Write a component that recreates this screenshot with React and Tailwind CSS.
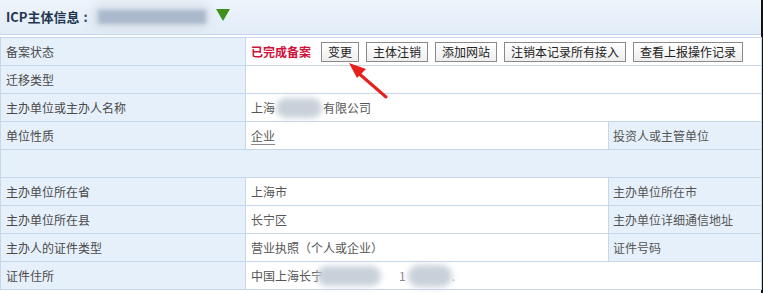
import React from "react";

const font = { fontFamily: '"Noto Sans CJK SC", "Noto Sans", sans-serif' };

function Btn({ children }) {
  return (
    <span className="inline-flex h-[20px] items-center border border-[#8a8a8a] bg-gradient-to-b from-white to-[#eeeeee] px-[6px] text-[12px] leading-none text-[#222]">
      {children}
    </span>
  );
}

function Blur({ w, h = 18, className = "" }) {
  return (
    <span
      className={"inline-block rounded-full bg-[#c8d0da] blur-[3px] align-middle " + className}
      style={{ width: w, height: h }}
    />
  );
}

const L = "h-[28px] border border-[#c7d7ea] bg-[#e6f0fb] pl-[5px] text-[12px] text-[#4a4a4a] align-middle";
const V = "h-[28px] border border-[#c7d7ea] bg-white pl-[5px] text-[12px] text-[#555] align-middle";
const L3 = "h-[28px] border border-[#c7d7ea] bg-[#e6f0fb] pl-[4px] text-[12px] text-[#555] align-middle";

export default function App() {
  return (
    <div className="flex h-[293px] w-[763px] overflow-hidden bg-white" style={font}>
      <div className="relative w-[761px]">
        <div className="flex h-[35px] items-center border-b border-[#c2d5ea] bg-gradient-to-b from-[#eef4fb] to-[#e2ecf8] pl-[6px]">
          <span className="text-[13px] font-bold text-[#22364f]">ICP主体信息</span>
          <span className="ml-[4px] text-[13px] font-bold text-[#22364f]">:</span>
          <span className="relative ml-[2px] inline-flex h-[30px] w-[122px] items-center">
            <span className="absolute inset-0 rounded-full bg-[#dce4ed] blur-[4px]" />
            <span className="absolute left-[8px] top-[8px] h-[14px] w-[108px] bg-[#a9b8cb] blur-[2px]" />
          </span>
          <svg width="14" height="12" viewBox="0 0 14 12" className="ml-[4px] -mt-[4px]">
            <polygon points="0,0 14,0 7,12" fill="#3f8f1c" />
          </svg>
        </div>
        <div className="h-[2px]" />
        <table className="w-[761px] table-fixed border-collapse">
          <colgroup>
            <col className="w-[245px]" />
            <col className="w-[363px]" />
            <col className="w-[153px]" />
          </colgroup>
          <tbody>
            <tr>
              <td className={L}>备案状态</td>
              <td className={V} colSpan={2}>
                <div className="flex items-center">
                  <span className="text-[12px] font-bold text-[#d1123c]">已完成备案</span>
                  <span className="ml-[10px] flex items-center gap-[7px]">
                    <Btn>变更</Btn>
                    <Btn>主体注销</Btn>
                    <Btn>添加网站</Btn>
                    <Btn>注销本记录所有接入</Btn>
                    <Btn>查看上报操作记录</Btn>
                  </span>
                </div>
              </td>
            </tr>
            <tr>
              <td className={L}>迁移类型</td>
              <td className={V} colSpan={2}></td>
            </tr>
            <tr>
              <td className={L}>主办单位或主办人名称</td>
              <td className={V} colSpan={2}>
                <span className="inline-flex items-center">
                  上海
                  <Blur w={46} h={20} className="mx-[1px]" />
                  有限公司
                </span>
              </td>
            </tr>
            <tr>
              <td className={L}>单位性质</td>
              <td className={V}>
                <span className="underline decoration-[#888] underline-offset-[3px]">企业</span>
              </td>
              <td className={L3}>投资人或主管单位</td>
            </tr>
            <tr>
              <td className={L} colSpan={3}></td>
            </tr>
            <tr>
              <td className={L}>主办单位所在省</td>
              <td className={V}>上海市</td>
              <td className={L3}>主办单位所在市</td>
            </tr>
            <tr>
              <td className={L}>主办单位所在县</td>
              <td className={V}>长宁区</td>
              <td className={L3}>主办单位详细通信地址</td>
            </tr>
            <tr>
              <td className={L}>主办人的证件类型</td>
              <td className={V}>营业执照（个人或企业）</td>
              <td className={L3}>证件号码</td>
            </tr>
            <tr>
              <td className={L}>证件住所</td>
              <td className={V} colSpan={2}>
                <span className="inline-flex items-center">
                  中国上海长宁
                  <Blur w={64} h={20} className="-ml-[6px]" />
                  <span className="ml-[18px] text-[#888]">1</span>
                  <Blur w={44} h={22} className="ml-[2px]" />
                  <span className="text-[#bbb]">.</span>
                </span>
              </td>
            </tr>
          </tbody>
        </table>
        <svg className="pointer-events-none absolute left-0 top-0" width="761" height="293">
          <line x1="386" y1="97" x2="356" y2="71" stroke="#e8201c" strokeWidth="3" strokeLinecap="round" />
          <polygon points="349,63 366,69 357,78" fill="#e8201c" />
        </svg>
      </div>
      <div className="w-[2px] bg-[#111]" />
    </div>
  );
}
